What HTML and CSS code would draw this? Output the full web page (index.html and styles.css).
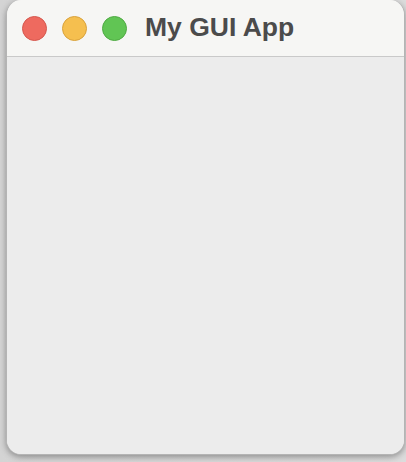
FILE: index.html
```html
<!DOCTYPE html>
<html>
<head>
<meta charset="utf-8">
<link rel="stylesheet" href="styles.css">
</head>
<body>
<div class="desktop">
  <div class="window">
    <div class="titlebar">
      <div class="lights">
        <span class="light red"></span>
        <span class="light yellow"></span>
        <span class="light green"></span>
      </div>
      <div class="title">My GUI App</div>
    </div>
    <div class="content"></div>
  </div>
</div>
</body>
</html>
```
FILE: styles.css
```css
html, body {
  margin: 0;
  padding: 0;
  width: 406px;
  height: 462px;
  overflow: hidden;
  background: #d6d6d6;
}
.desktop {
  width: 406px;
  height: 462px;
  padding: 0 1px 7px 6px;
  box-sizing: border-box;
  display: flex;
  background: linear-gradient(to right, #d4d4d4, #dcdcdc);
}
.window {
  flex: 1;
  display: flex;
  flex-direction: column;
  border-radius: 15px;
  overflow: hidden;
  border: 1px solid #b4b4b4;
  border-top: none;
  box-shadow: 0 2px 6px rgba(0,0,0,0.35);
  background: #ececec;
}
.titlebar {
  height: 56px;
  flex: none;
  background: #f6f6f4;
  border-bottom: 1px solid #c9c9c9;
  display: flex;
  align-items: center;
  padding-left: 15px;
  gap: 18px;
}
.lights {
  display: flex;
  gap: 15px;
}
.light {
  width: 25px;
  height: 25px;
  border-radius: 50%;
  box-sizing: border-box;
}
.red { background: #ee6a5f; border: 1px solid #d5574d; }
.yellow { background: #f5bf4f; border: 1px solid #d9a23b; }
.green { background: #61c554; border: 1px solid #4faa42; }
.title {
  font-family: "Liberation Sans", Arial, sans-serif;
  font-weight: bold;
  font-size: 26.5px;
  color: #4b4b4b;
  padding-bottom: 1px;
}
.content {
  flex: 1;
  background: #ececec;
}
```
